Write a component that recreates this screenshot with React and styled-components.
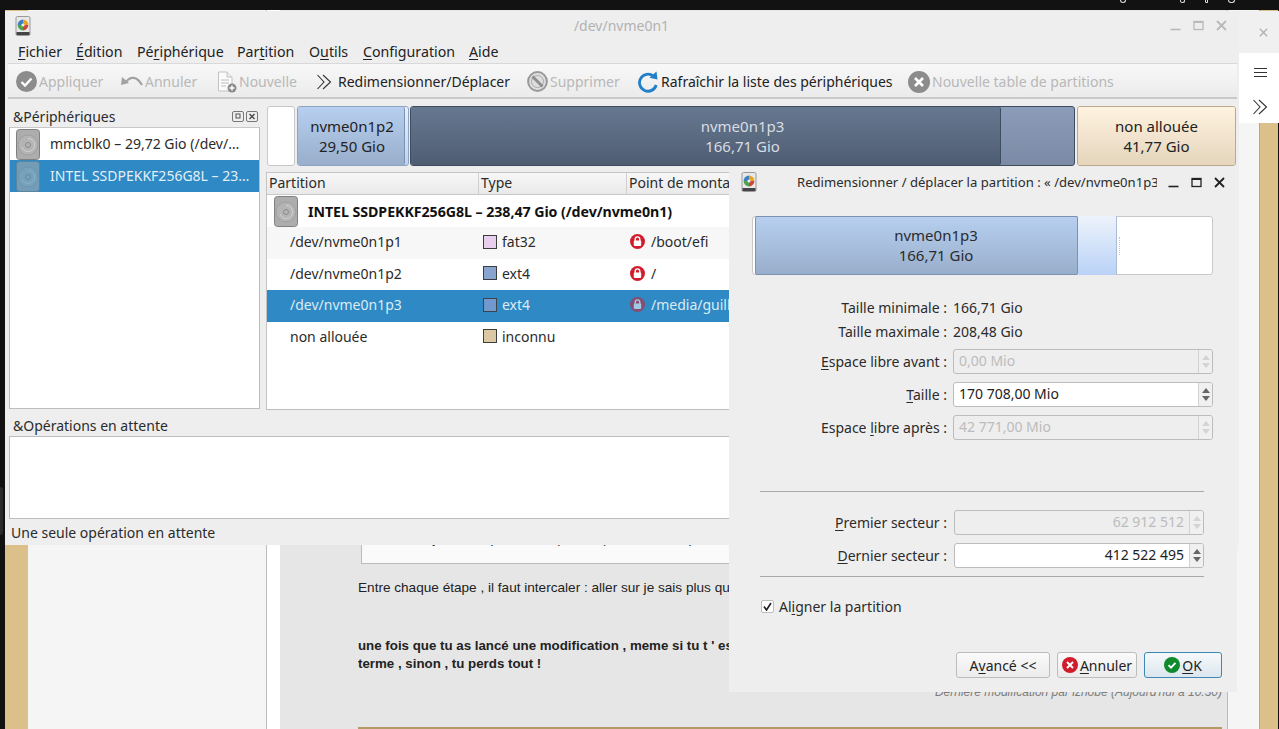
import React from "react";
import styled, { createGlobalStyle, css } from "styled-components";

const FONT = `"Noto Sans", "Open Sans", "DejaVu Sans", sans-serif`;

const Global = createGlobalStyle`
  html, body { margin: 0; padding: 0; background: #111; }
  #root { width: 1279px; height: 729px; overflow: hidden; }
  * { box-sizing: border-box; }
`;

const Desktop = styled.div`
  position: relative; width: 1279px; height: 729px; overflow: hidden;
  display: flex; flex-direction: column; background: #111;
  font-family: ${FONT}; font-size: 14px; color: #2b2b2b;
`;
const TopBar = styled.div`height: 10px; background: #121212; flex: none; position: relative; display: flex; justify-content: flex-end; gap: 20px; padding-right: 44px;`;
const TopMark = styled.i`width: ${p => p.$w}px; height: 3px; border-bottom: 1px solid #ddd; border-left: 1px solid #ddd; border-right: 1px solid #ddd; border-radius: 0 0 3px 3px; margin-right: ${p => p.$m || 0}px;`;
const Page = styled.div`flex: 1; display: flex; min-height: 0;`;
const LeftEdge = styled.div`width: 5px; background: #111; flex: none; padding-top: 477px;`;
const EdgeDock = styled.div`width: 3px; height: 48px; background: #2b2b2b; border-radius: 0 3px 3px 0;`;
const TanStrip = styled.div`background: #dbc08a; flex: none; width: ${p => p.$w}px;`;
const SideColumn = styled.div`width: 239px; flex: none; background: #f5f5f5; border-right: 1px solid #bdbdbd;`;
const Gutter = styled.div`width: 13px; flex: none; background: #fff;`;
const Post = styled.main`
  width: 947px; flex: none; background: #e6e6e6; padding: 516px 5px 0 78px;
  font-family: "Liberation Sans", Arial, sans-serif; font-size: 13.3px; color: #222;
`;
const QuoteBox = styled.div`
  margin-left: 3px; height: 38px; background: #fafafa; border-left: 1px solid #bbb; border-bottom: 1px solid #bbb;
  padding: 5px 0 0 8px; display: flex; white-space: nowrap;
`;
const QuoteWord = styled.span`width: ${p => p.$w}px; flex: none; text-align: right;`;
const PostLine = styled.p`margin: ${p => p.$top || 0}px 0 0; line-height: 18px; white-space: nowrap; overflow: hidden; font-weight: ${p => p.$bold ? 700 : 400}; font-size: ${p => p.$bold ? 13.3 : 13.6}px;`;
const Signature = styled.p`margin: 12px 0 0; height: 15px; line-height: 15px; text-align: right; font-style: italic; font-size: 12px; color: #7c7c7c;`;
const TanRule = styled.div`height: 2px; background: #b09a66; margin-top: 27px;`;
const RightColumn = styled.div`width: 33px; flex: none; background: #f5f5f5; border-right: 1px solid #a8a8a8; border-left: 1px solid #bbb;`;

/* main window */
const Window = styled.section`
  position: absolute; left: 5px; top: 11px; width: 1234px; height: 534px;
  background: #eeeeee; display: flex; flex-direction: column;
`;
const TitleBar = styled.header`height: 29px; flex: none; display: flex; align-items: center; padding: 0 12px 0 10px;`;
const WinTitle = styled.div`flex: 1; text-align: center; font-size: 14px; color: #b2b2b2; padding-left: 42px;`;
const WinButtons = styled.div`display: flex; align-items: center; gap: ${p => p.$gap}px; flex: none; margin-left: auto;`;
const MenuBar = styled.nav`height: 23px; flex: none; display: flex; align-items: center; padding-left: 13px; font-size: 14.2px; color: #222;`;
const MenuItem = styled.span`width: ${p => p.$w}px; flex: none; white-space: nowrap;`;
const U = styled.span`text-decoration: underline; text-decoration-thickness: 1px; text-underline-offset: 2px;`;
const Toolbar = styled.div`
  height: 36px; flex: none; margin: 0 2px 0 3px; padding: 2px 0 0 8px; display: flex; align-items: center;
  background: linear-gradient(#f8f8f8, #ebebeb); border-top: 1px solid #d9d9d9; border-bottom: 2px solid #c9c9c9;
`;
const ToolItem = styled.div`width: ${p => p.$w}px; flex: none; display: flex; align-items: center; gap: ${p => p.$gap ?? 2}px; font-size: 14px; white-space: nowrap; color: ${p => p.$off ? "#b8b8b8" : "#222"};`;

const Panes = styled.div`height: 313px; flex: none; display: flex; gap: 6px; padding: 0 3px 0 4px;`;
const DevicePane = styled.aside`width: 251px; flex: none; display: flex; flex-direction: column;`;
const DockHead = styled.div`height: 28px; flex: none; display: flex; align-items: center; justify-content: space-between; padding: 6px 2px 0 4px; font-size: 14px;`;
const DockButtons = styled.div`display: flex; gap: 2px;`;
const DeviceList = styled.div`height: 282px; background: #fff; border: 1px solid #bdbdbd; border-top: 1px solid #c8c8c8;`;
const DeviceRow = styled.div`
  height: 32px; display: flex; align-items: center; gap: 8px; padding: 0 4px; font-size: 14px; white-space: nowrap;
  ${p => p.$sel && css`background: #2e89c4; color: #e3eff7;`}
`;
const DiskSlot = styled.span`flex: none; display: flex; opacity: ${p => p.$sel ? .55 : 1};`;
const DeviceName = styled.span`overflow: hidden; text-overflow: ellipsis; padding-bottom: 2px;`;

const WorkPane = styled.div`flex: 1; min-width: 0; display: flex; flex-direction: column; padding-top: 7px;`;
const PartBar = styled.div`height: 60px; flex: none; display: flex; margin-bottom: 6px; padding-left: 1px; font-size: 15px; text-align: center; line-height: 20px;`;
const Segment = styled.div`
  flex: none; width: ${p => p.$w}px; margin-left: ${p => p.$ml || 0}px; display: flex; border-radius: 3px; overflow: hidden;
  border: 1px solid ${p => p.$line || "#c8c8c8"}; background: ${p => p.$bg || "#fff"};
`;
const SegFill = styled.div`
  flex: ${p => p.$w ? "none" : 1}; width: ${p => p.$w ? p.$w + "px" : "auto"}; display: flex; flex-direction: column; align-items: center; justify-content: center;
  padding: 0 0 1px ${p => p.$pad || 0}px;
  background: ${p => p.$bg}; color: ${p => p.$color || "#222"};
  ${p => p.$edge && css`border-right: 1px solid ${p.$edge}; border-radius: 2px;`}
`;
const Table = styled.div`height: 238px; background: #fff; border: 1px solid #c4c4c4; border-bottom-color: #bdbdbd;`;
const TableHead = styled.div`
  height: 22px; display: grid; grid-template-columns: 212px 148px 1fr; background: linear-gradient(#f7f7f7, #e9e9e9);
  border-bottom: 1px solid #c8c8c8; font-size: 14px;
`;
const HeadCell = styled.div`padding: 0 2px; border-right: 1px solid #cfcfcf; white-space: nowrap;`;
const DiskRow = styled.div`height: 32px; display: flex; align-items: center; gap: 8px; padding-left: 5px; font-weight: 700; font-size: 14.2px; letter-spacing: -0.05px; white-space: nowrap; color: #111;`;
const Row = styled.div`
  height: ${p => p.$h || 31.5}px; display: grid; grid-template-columns: 212px 148px 1fr; align-items: center; font-size: 14px; padding-bottom: 2px;
  background: ${p => p.$sel ? "#2e89c4" : p.$alt ? "#f7f7f7" : "#fff"}; color: ${p => p.$sel ? "#dcebf5" : "#2b2b2b"};
`;
const CellName = styled.div`padding-left: 23px;`;
const CellType = styled.div`display: flex; align-items: center; gap: 5px; padding-left: 4px;`;
const Swatch = styled.i`width: 14px; height: 14px; flex: none; background: ${p => p.$c}; border: 1px solid #3d3d3d; opacity: ${p => p.$sel ? .9 : 1};`;
const CellMount = styled.div`display: flex; align-items: center; gap: 6px; padding-left: 3px; white-space: nowrap;`;

const OpsHead = styled.div`height: 24px; flex: none; padding: 4px 0 0 8px; font-size: 14px;`;
const OpsBox = styled.div`height: 83px; flex: none; margin: 0 2px 0 4px; background: #fff; border: 1px solid #bdbdbd;`;
const Status = styled.div`flex: 1; padding: 4px 0 0 6px; font-size: 14px;`;

/* right side panel */
const SidePanel = styled.aside`position: absolute; left: 1239px; top: 11px; width: 40px; height: 112px; background: #f0f0f0; display: flex; flex-direction: column;`;
const SideClose = styled.div`height: 42px; flex: none; display: flex; align-items: center; justify-content: center; padding-left: 8px;`;
const SideTools = styled.div`flex: 1; background: #fff; display: flex; flex-direction: column; align-items: center; gap: 21px; padding: 14px 0 0 2px;`;

/* dialog */
const Dialog = styled.section`
  position: absolute; left: 729px; top: 167px; width: 508px; height: 525px; background: #eeeeee;
  display: flex; flex-direction: column; font-size: 14px; color: #2b2b2b;
`;
const DialogTitle = styled.header`height: 30px; flex: none; display: flex; align-items: center; padding: 0 12px 0 12px;`;
const DialogCaption = styled.div`width: 360px; margin-left: 40px; overflow: hidden; white-space: nowrap; flex: none; font-size: 13.1px;`;
const ResizeBar = styled.div`
  height: 59px; flex: none; margin: 19px 24px 0 23px; background: #fff; border: 1px solid #c8c8c8; border-radius: 3px;
  display: flex; align-items: stretch; padding-left: 2px; text-align: center; line-height: 20px; font-size: 15px;
`;
const ResizeBody = styled.div`width: 323px; flex: none; display: flex; flex-direction: column; justify-content: center; padding: 0 0 1px 39px; background: linear-gradient(#b7cff0, #98aecb); border: 1px solid #7d92b0; border-radius: 2px; margin: -1px 0;`;
const ResizeSpare = styled.div`width: 39px; flex: none; background: linear-gradient(#edf3fc, #b9d2f6); border-right: 1px solid #a9bcd8; margin: -1px 0;`;
const ResizeHandle = styled.i`width: 0; height: 18px; align-self: center; margin-left: 2px; border-left: 1px dotted #c4c4c4;`;
const InfoRow = styled.div`display: flex; align-items: center; height: ${p => p.$h}px; margin-top: ${p => p.$top || 0}px; flex: none;`;
const FieldLabel = styled.div`width: 218px; flex: none; text-align: right; white-space: nowrap;`;
const FieldValue = styled.div`margin-left: 6px;`;
const Spin = styled.div`
  width: ${p => p.$w}px; margin-left: ${p => p.$ml}px; height: 100%; flex: none; display: flex; border-radius: 3px; border: 1px solid #bcbcbc;
  background: ${p => p.$off ? "#eeeeee" : "#fff"}; color: ${p => p.$off ? "#bcbcbc" : "#222"}; overflow: hidden;
`;
const SpinText = styled.div`flex: 1; padding: 0 ${p => p.$right ? "5px" : "0"} 3px ${p => p.$right ? "0" : "5px"}; display: flex; align-items: center; justify-content: ${p => p.$right ? "flex-end" : "flex-start"};`;
const SpinArrows = styled.div`width: 14px; flex: none; border-left: 1px solid #d2d2d2; background: #f0f0f0; display: flex; flex-direction: column; align-items: center; justify-content: center; gap: 3px; color: ${p => p.$off ? "#d4d4d4" : "#666"};`;
const Tri = styled.i`width: 0; height: 0; border-left: 4px solid transparent; border-right: 4px solid transparent; ${p => p.$down ? css`border-top: 5px solid currentColor;` : css`border-bottom: 5px solid currentColor;`}`;
const Divider = styled.hr`margin: ${p => p.$top}px 33px 0 31px; border: 0; border-top: 1px solid #a9a9a9; height: 1px; flex: none;`;
const CheckRow = styled.label`display: flex; align-items: center; gap: 5px; margin: 21px 0 0 32px; height: 16px; flex: none;`;
const CheckBox = styled.span`width: 13px; height: 13px; flex: none; background: #fff; border: 1px solid #bdbdbd; border-radius: 2px; display: flex; align-items: center; justify-content: center;`;
const ButtonRow = styled.div`display: flex; margin: 38px 15px 0 0; justify-content: flex-end; gap: 7px; flex: none;`;
const DialogButton = styled.button`
  width: ${p => p.$w}px; height: 26px; padding: 0; display: flex; align-items: center; justify-content: center; gap: 2px;
  font: inherit; color: #222; border-radius: 3px;
  background: ${p => p.$primary ? "linear-gradient(#f6f9fb, #dbe6ee)" : "linear-gradient(#fafafa, #ececec)"};
  border: 1px solid ${p => p.$primary ? "#3f88b5" : "#bcbcbc"};
`;

/* drawings */
const GpartedIcon = () => (
  <svg width="16" height="20" viewBox="0 0 16 20">
    <rect x="1" y="0.5" width="14" height="19" rx="1.5" fill="#e8e8e8" stroke="#999" />
    <rect x="1.5" y="16" width="13" height="3" fill="#444" />
    <path d="M8 9 L8 3.5 A5.5 5.5 0 0 1 13.4 9 Z" fill="#e9a321" />
    <path d="M8 9 L13.4 9 A5.5 5.5 0 0 1 8 14.5 Z" fill="#d0453f" />
    <path d="M8 9 L8 14.5 A5.5 5.5 0 0 1 2.6 9 Z" fill="#4da34a" />
    <path d="M8 9 L2.6 9 A5.5 5.5 0 0 1 8 3.5 Z" fill="#3b7fc4" />
    <circle cx="8" cy="9" r="1.6" fill="#eee" />
  </svg>
);
const DiskIcon = () => (
  <svg width="28" height="31" viewBox="0 0 28 31">
    <rect x="2.5" y="0.5" width="23" height="30" rx="3" fill="#adadad" stroke="#808080" />
    <circle cx="14" cy="16" r="10" fill="#b4b4b4" stroke="#a0a0a0" />
    <path d="M14 9.5 A6.5 6.5 0 1 1 8 18" fill="none" stroke="#d2d2d2" />
    <circle cx="14" cy="16" r="2.5" fill="none" stroke="#8b8b8b" />
  </svg>
);
const ApplyIcon = () => (
  <svg width="21" height="21" viewBox="0 0 21 21"><circle cx="10.5" cy="10.5" r="10.5" fill="#8c8c8c" /><path d="M5.5 11 L9 14.5 L15.5 7.5" fill="none" stroke="#fff" strokeWidth="2.4" /></svg>
);
const UndoIcon = () => (
  <svg width="22" height="14" viewBox="0 0 22 14"><path d="M5 7 C9 1 16 1 21 10" fill="none" stroke="#a2a2a2" strokeWidth="2.2" /><path d="M0 10 L1 2 L8 8 Z" fill="#a2a2a2" /></svg>
);
const NewIcon = () => (
  <svg width="20" height="22" viewBox="0 0 20 22">
    <path d="M1.5 1 H10 L15 6 V20 H1.5 Z" fill="#fbfbfb" stroke="#c2c2c2" /><path d="M10 1 V6 H15" fill="#eee" stroke="#c2c2c2" />
    <path d="M4 9 H12 M4 12 H12 M4 15 H9" stroke="#bdbdbd" />
    <circle cx="15" cy="17" r="4.5" fill="#8c8c8c" /><path d="M12.5 17 H17.5 M15 14.5 V19.5" stroke="#fff" strokeWidth="1.4" />
  </svg>
);
const ChevronsIcon = () => (
  <svg width="16" height="16" viewBox="0 0 16 16"><path d="M1.5 1 L8 8 L1.5 15 M7 1 L14.5 8 L7 15" fill="none" stroke="#333" strokeWidth="1.1" /></svg>
);
const BanIcon = () => (
  <svg width="21" height="21" viewBox="0 0 21 21"><circle cx="10.5" cy="10.5" r="9.4" fill="#dedede" stroke="#999" strokeWidth="2" /><circle cx="10.5" cy="10.5" r="6" fill="none" stroke="#aaa" /><path d="M5.5 5.5 L15.5 15.5" stroke="#8f8f8f" strokeWidth="3" /></svg>
);
const RefreshIcon = () => (
  <svg width="22" height="22" viewBox="0 0 22 22"><path d="M16.5 5.2 A8.5 8.5 0 1 0 19.2 14" fill="none" stroke="#1f7fc9" strokeWidth="2.8" /><path d="M12.5 6.8 L20.5 8.5 L19.5 0.5 Z" fill="#1f7fc9" /></svg>
);
const XCircleIcon = () => (
  <svg width="22" height="22" viewBox="0 0 22 22"><circle cx="11" cy="11" r="11" fill="#8c8c8c" /><path d="M7 7 L15 15 M15 7 L7 15" stroke="#fff" strokeWidth="2.6" /></svg>
);
const LockIcon = ({ faded }) => (
  <svg width="15" height="15" viewBox="0 0 15 15" style={faded ? { opacity: .55 } : undefined}>
    <circle cx="7.5" cy="7.5" r="7.5" fill="#d01c2b" /><rect x="3.8" y="6.6" width="7.4" height="5.4" rx="1" fill="#fff" />
    <path d="M5.2 7 V5.2 A2.3 2.3 0 0 1 9.8 5.2 V7" fill="none" stroke="#fff" strokeWidth="1.4" />
  </svg>
);
const CtrlMin = ({ c }) => <svg width="11" height="11" viewBox="0 0 11 11"><path d="M0.5 9.5 H10.5" stroke={c} strokeWidth="1.6" /></svg>;
const CtrlMax = ({ c }) => <svg width="11" height="11" viewBox="0 0 11 11"><rect x="1" y="1.5" width="9" height="8" fill="none" stroke={c} strokeWidth="1.3" /><path d="M1 2 H10" stroke={c} strokeWidth="2" /></svg>;
const CtrlClose = ({ c, s = 11 }) => <svg width={s} height={s} viewBox="0 0 11 11"><path d="M1 1 L10 10 M10 1 L1 10" stroke={c} strokeWidth="1.8" /></svg>;
const DockFloat = () => <svg width="12" height="11" viewBox="0 0 12 11"><rect x=".5" y=".5" width="11" height="10" rx="1.5" fill="none" stroke="#777" /><rect x="4" y="3" width="4" height="4" fill="none" stroke="#555" /></svg>;
const DockClose = () => <svg width="12" height="11" viewBox="0 0 12 11"><rect x=".5" y=".5" width="11" height="10" rx="1.5" fill="none" stroke="#777" /><path d="M3.5 3 L8.5 8 M8.5 3 L3.5 8" stroke="#444" strokeWidth="1.3" /></svg>;
const CancelIcon = () => <svg width="16" height="16" viewBox="0 0 16 16"><circle cx="8" cy="8" r="8" fill="#d01c2b" /><path d="M5 5 L11 11 M11 5 L5 11" stroke="#fff" strokeWidth="2" /></svg>;
const OkIcon = () => <svg width="16" height="16" viewBox="0 0 16 16"><circle cx="8" cy="8" r="8" fill="#0f8a2d" /><path d="M4.5 8.2 L7 10.7 L11.5 5.8" fill="none" stroke="#fff" strokeWidth="1.9" /></svg>;
const Burger = () => <svg width="13" height="11" viewBox="0 0 13 11"><path d="M0 1.5 H13 M0 5.5 H13 M0 9.5 H13" stroke="#333" strokeWidth="1.2" /></svg>;
const Tick = () => <svg width="9" height="9" viewBox="0 0 9 9"><path d="M1 4.5 L3.5 8 L8 1" fill="none" stroke="#222" strokeWidth="1.7" /></svg>;

const SpinField = ({ value, off, right, w, ml }) => (
  <Spin $off={off} $w={w} $ml={ml}>
    <SpinText $right={right}>{value}</SpinText>
    <SpinArrows $off={off}><Tri /><Tri $down /></SpinArrows>
  </Spin>
);

export default function App() {
  return (
    <Desktop>
      <Global />
      <TopBar>
        <TopMark $w={6} $m={34} /><TopMark $w={5} /><TopMark $w={3} /><TopMark $w={7} />
      </TopBar>
      <Page>
        <LeftEdge><EdgeDock /></LeftEdge>
        <TanStrip $w={23} />
        <SideColumn />
        <Gutter />
        <Post>
          <QuoteBox>
            <QuoteWord $w={66}>Il faut j</QuoteWord>
            <QuoteWord $w={62}>p</QuoteWord>
            <QuoteWord $w={62}>(</QuoteWord>
            <QuoteWord $w={48}>)</QuoteWord>
            <QuoteWord $w={88}>p</QuoteWord>
          </QuoteBox>
          <PostLine $top={15}>Entre chaque étape , il faut intercaler : aller sur je sais plus quelle option et relancer</PostLine>
          <PostLine $top={40} $bold>une fois que tu as lancé une modification , meme si tu t ' es trompé , il faut aller jusqu ' au bout et</PostLine>
          <PostLine $bold>terme , sinon , tu perds tout !</PostLine>
          <Signature>Dernière modification par iznobe (Aujourd'hui à 10:30)</Signature>
          <TanRule />
        </Post>
        <RightColumn />
        <TanStrip $w={18} />
      </Page>

      <Window>
        <TitleBar>
          <GpartedIcon />
          <WinTitle>/dev/nvme0n1</WinTitle>
          <WinButtons $gap={12}><CtrlMin c="#b9b9b9" /><CtrlMax c="#b9b9b9" /><CtrlClose c="#b9b9b9" /></WinButtons>
        </TitleBar>
        <MenuBar>
          <MenuItem $w={58}><U>F</U>ichier</MenuItem>
          <MenuItem $w={61}><U>É</U>dition</MenuItem>
          <MenuItem $w={100}>Pé<U>r</U>iphérique</MenuItem>
          <MenuItem $w={72}>Par<U>t</U>ition</MenuItem>
          <MenuItem $w={54}>O<U>u</U>tils</MenuItem>
          <MenuItem $w={106}><U>C</U>onfiguration</MenuItem>
          <MenuItem $w={50}><U>A</U>ide</MenuItem>
        </MenuBar>
        <Toolbar>
          <ToolItem $w={105} $off><ApplyIcon />Appliquer</ToolItem>
          <ToolItem $w={96} $off><UndoIcon />Annuler</ToolItem>
          <ToolItem $w={99} $off><NewIcon />Nouvelle</ToolItem>
          <ToolItem $w={211} $gap={6}><ChevronsIcon />Redimensionner/Déplacer</ToolItem>
          <ToolItem $w={110} $off><BanIcon />Supprimer</ToolItem>
          <ToolItem $w={271}><RefreshIcon />Rafraîchir la liste des périphériques</ToolItem>
          <ToolItem $w={230} $off><XCircleIcon />Nouvelle table de partitions</ToolItem>
        </Toolbar>
        <Panes>
          <DevicePane>
            <DockHead>&amp;Périphériques<DockButtons><DockFloat /><DockClose /></DockButtons></DockHead>
            <DeviceList>
              <DeviceRow><DiskSlot><DiskIcon /></DiskSlot><DeviceName>mmcblk0 – 29,72 Gio (/dev/…</DeviceName></DeviceRow>
              <DeviceRow $sel><DiskSlot $sel><DiskIcon /></DiskSlot><DeviceName>INTEL SSDPEKKF256G8L – 23…</DeviceName></DeviceRow>
            </DeviceList>
          </DevicePane>
          <WorkPane>
            <PartBar>
              <Segment $w={28} />
              <Segment $w={112} $ml={2} $line="#8ea3c0" $bg="linear-gradient(#e8f0fc, #bcd4f6)">
                <SegFill $w={107} $pad={2} $bg="linear-gradient(#b7cff0, #98aecb)" $edge="#7d92b0"><span>nvme0n1p2</span><span>29,50 Gio</span></SegFill>
              </Segment>
              <Segment $w={665} $ml={1} $line="#3f4c60" $bg="linear-gradient(#8b9cb8, #7b8ba6)">
                <SegFill $w={590} $pad={74} $bg="linear-gradient(#667890, #4f5d73)" $color="#d8dde3" $edge="#3f4c60"><span>nvme0n1p3</span><span>166,71 Gio</span></SegFill>
              </Segment>
              <Segment $w={159} $ml={2} $line="#b9a88a">
                <SegFill $bg="linear-gradient(#fff3e0, #e4d5bc)"><span>non allouée</span><span>41,77 Gio</span></SegFill>
              </Segment>
            </PartBar>
            <Table>
              <TableHead><HeadCell>Partition</HeadCell><HeadCell>Type</HeadCell><HeadCell>Point de montage</HeadCell></TableHead>
              <DiskRow><DiskIcon />INTEL SSDPEKKF256G8L – 238,47 Gio (/dev/nvme0n1)</DiskRow>
              <Row $alt>
                <CellName>/dev/nvme0n1p1</CellName>
                <CellType><Swatch $c="#e8cfee" />fat32</CellType>
                <CellMount><LockIcon />/boot/efi</CellMount>
              </Row>
              <Row>
                <CellName>/dev/nvme0n1p2</CellName>
                <CellType><Swatch $c="#8aa4d0" />ext4</CellType>
                <CellMount><LockIcon />/</CellMount>
              </Row>
              <Row $sel>
                <CellName>/dev/nvme0n1p3</CellName>
                <CellType><Swatch $c="#7a9bcf" $sel />ext4</CellType>
                <CellMount><LockIcon faded />/media/guillaume</CellMount>
              </Row>
              <Row>
                <CellName>non allouée</CellName>
                <CellType><Swatch $c="#dcc8a4" />inconnu</CellType>
                <CellMount />
              </Row>
            </Table>
          </WorkPane>
        </Panes>
        <OpsHead>&amp;Opérations en attente</OpsHead>
        <OpsBox />
        <Status>Une seule opération en attente</Status>
      </Window>

      <SidePanel>
        <SideClose><CtrlClose c="#b5b5b5" s={9} /></SideClose>
        <SideTools><Burger /><ChevronsIcon /></SideTools>
      </SidePanel>

      <Dialog>
        <DialogTitle>
          <GpartedIcon />
          <DialogCaption>Redimensionner / déplacer la partition : « /dev/nvme0n1p3 »</DialogCaption>
          <WinButtons $gap={12}><CtrlMin c="#222" /><CtrlMax c="#222" /><CtrlClose c="#222" /></WinButtons>
        </DialogTitle>
        <ResizeBar>
          <ResizeBody><span>nvme0n1p3</span><span>166,71 Gio</span></ResizeBody>
          <ResizeSpare />
          <ResizeHandle />
        </ResizeBar>
        <InfoRow $h={24} $top={20}><FieldLabel>Taille minimale :</FieldLabel><FieldValue>166,71 Gio</FieldValue></InfoRow>
        <InfoRow $h={24}><FieldLabel>Taille maximale :</FieldLabel><FieldValue>208,48 Gio</FieldValue></InfoRow>
        <InfoRow $h={25} $top={6}><FieldLabel><U>E</U>space libre avant :</FieldLabel><SpinField off value="0,00 Mio" w={260} ml={6} /></InfoRow>
        <InfoRow $h={25} $top={8}><FieldLabel><U>T</U>aille :</FieldLabel><SpinField value="170 708,00 Mio" w={260} ml={6} /></InfoRow>
        <InfoRow $h={25} $top={8}><FieldLabel>Espace <U>l</U>ibre après :</FieldLabel><SpinField off value="42 771,00 Mio" w={260} ml={6} /></InfoRow>
        <Divider $top={51} />
        <InfoRow $h={25} $top={18}><FieldLabel><U>P</U>remier secteur :</FieldLabel><SpinField off right value="62 912 512" w={250} ml={7} /></InfoRow>
        <InfoRow $h={25} $top={8}><FieldLabel><U>D</U>ernier secteur :</FieldLabel><SpinField right value="412 522 495" w={250} ml={7} /></InfoRow>
        <Divider $top={8} />
        <CheckRow><CheckBox><Tick /></CheckBox><span>Al<U>i</U>gner la partition</span></CheckRow>
        <ButtonRow>
          <DialogButton $w={94}><span>A<U>v</U>ancé &lt;&lt;</span></DialogButton>
          <DialogButton $w={80}><CancelIcon /><span><U>A</U>nnuler</span></DialogButton>
          <DialogButton $w={78} $primary><OkIcon /><span><U>O</U>K</span></DialogButton>
        </ButtonRow>
      </Dialog>
    </Desktop>
  );
}
